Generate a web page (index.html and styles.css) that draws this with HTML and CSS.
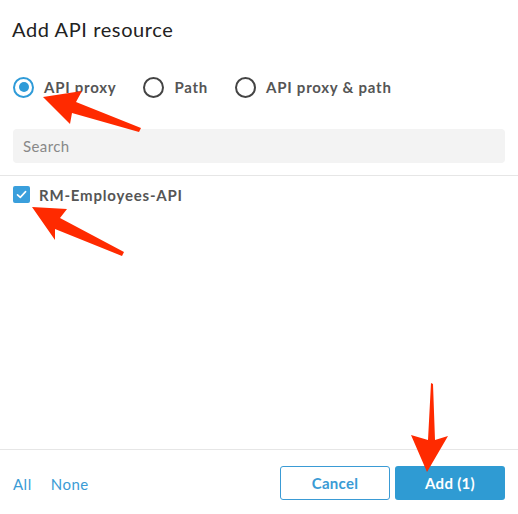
FILE: index.html
```html
<!DOCTYPE html>
<html>
<head>
<meta charset="utf-8">
<link rel="stylesheet" href="styles.css">
</head>
<body>
<div class="dialog">
  <h1 class="title">Add API resource</h1>
  <div class="radios">
    <label class="radio checked"><span class="circle"></span>API proxy</label>
    <label class="radio"><span class="circle"></span>Path</label>
    <label class="radio"><span class="circle"></span>API proxy &amp; path</label>
  </div>
  <div class="search-wrap"><div class="search">Search</div></div>
  <div class="list">
    <div class="item">
      <span class="check"><svg width="17" height="17" viewBox="0 0 17 17"><path d="M4.5 8.8 L7.3 11.4 L12.6 5.6" fill="none" stroke="#fff" stroke-width="1.6" stroke-linecap="round" stroke-linejoin="round"/></svg></span>
      <span class="item-label">RM-Employees-API</span>
    </div>
  </div>
  <div class="footer">
    <div class="links"><a class="link">All</a><a class="link">None</a></div>
    <div class="buttons">
      <button class="btn btn-outline">Cancel</button>
      <button class="btn btn-primary">Add (1)</button>
    </div>
  </div>
</div>
<svg class="arrows" width="518" height="514" viewBox="0 0 518 514">
  <path d="M43 97 L82 91 L76 102 L141 128 L139 132 L72 113 L70 124 Z" fill="#ff2a00"/>
  <path d="M32 207 L67 209 L60 218 L124 252 L122 256 L55 229 L55 240 Z" fill="#ff2a00"/>
  <path d="M427 472 L448 436 L435 440 L433 384 L431 383 L428 440 L411 435 Z" fill="#ff2a00"/>
</svg>
</body>
</html>
```
FILE: styles.css
```css
html, body {
  margin: 0;
  padding: 0;
  background: #fff;
}
body {
  font-family: Lato, "Open Sans", sans-serif;
  width: 518px;
  height: 514px;
  position: relative;
  overflow: hidden;
}
.dialog {
  display: flex;
  flex-direction: column;
  height: 514px;
}
.title {
  margin: 0;
  padding: 16px 12px 0;
  font-size: 20px;
  font-weight: 400;
  color: #222;
  line-height: 26px;
  letter-spacing: 0.6px;
}
.radios {
  display: flex;
  padding: 34px 13px 0;
  height: 22px;
  align-items: center;
}
.radio {
  display: flex;
  align-items: center;
  font-size: 15px;
  font-weight: 700;
  color: #555;
  letter-spacing: 0.75px;
  margin-right: 27px;
}
.circle {
  width: 17px;
  height: 17px;
  border: 2px solid #444;
  border-radius: 50%;
  margin-right: 10px;
  box-sizing: content-box;
  position: relative;
}
.radio.checked .circle {
  border-color: #2f9bd8;
}
.radio.checked .circle::after {
  content: "";
  position: absolute;
  left: 3.5px;
  top: 3.5px;
  width: 10px;
  height: 10px;
  border-radius: 50%;
  background: #2f9bd8;
}
.search-wrap {
  padding: 31px 13px 0;
}
.search {
  height: 34px;
  background: #f3f3f3;
  border-radius: 4px;
  font-size: 15px;
  color: #888;
  line-height: 34px;
  padding-left: 10px;
  letter-spacing: 0.4px;
}
.list {
  margin-top: 12px;
  border-top: 1px solid #e6e6e6;
  flex: 1;
  padding: 9px 13px;
}
.item {
  display: flex;
  align-items: center;
  height: 19px;
}
.check {
  width: 17px;
  height: 17px;
  background: #3a9fdc;
  border-radius: 2px;
  margin-right: 9px;
  display: flex;
}
.item-label {
  font-size: 15px;
  font-weight: 700;
  color: #555;
  letter-spacing: 0.8px;
}
.footer {
  border-top: 1px solid #e6e6e6;
  height: 62px;
  display: flex;
  align-items: center;
  justify-content: space-between;
  padding: 0 13px 2px;
}
.links {
  display: flex;
  gap: 19px;
  padding-top: 6px;
}
.link {
  color: #3a9bd5;
  font-size: 15px;
  letter-spacing: 0.5px;
}
.buttons {
  display: flex;
  gap: 5px;
  padding-top: 4px;
}
.btn {
  width: 110px;
  height: 34px;
  border-radius: 3px;
  font-family: Lato, sans-serif;
  font-size: 15px;
  font-weight: 700;
  letter-spacing: 0.3px;
  box-sizing: border-box;
}
.btn-outline {
  background: #fff;
  border: 1px solid #3a9bd5;
  color: #3a9bd5;
}
.btn-primary {
  background: #2f9bd3;
  border: none;
  color: #fff;
}
.arrows {
  position: absolute;
  left: 0;
  top: 0;
  pointer-events: none;
}
```
